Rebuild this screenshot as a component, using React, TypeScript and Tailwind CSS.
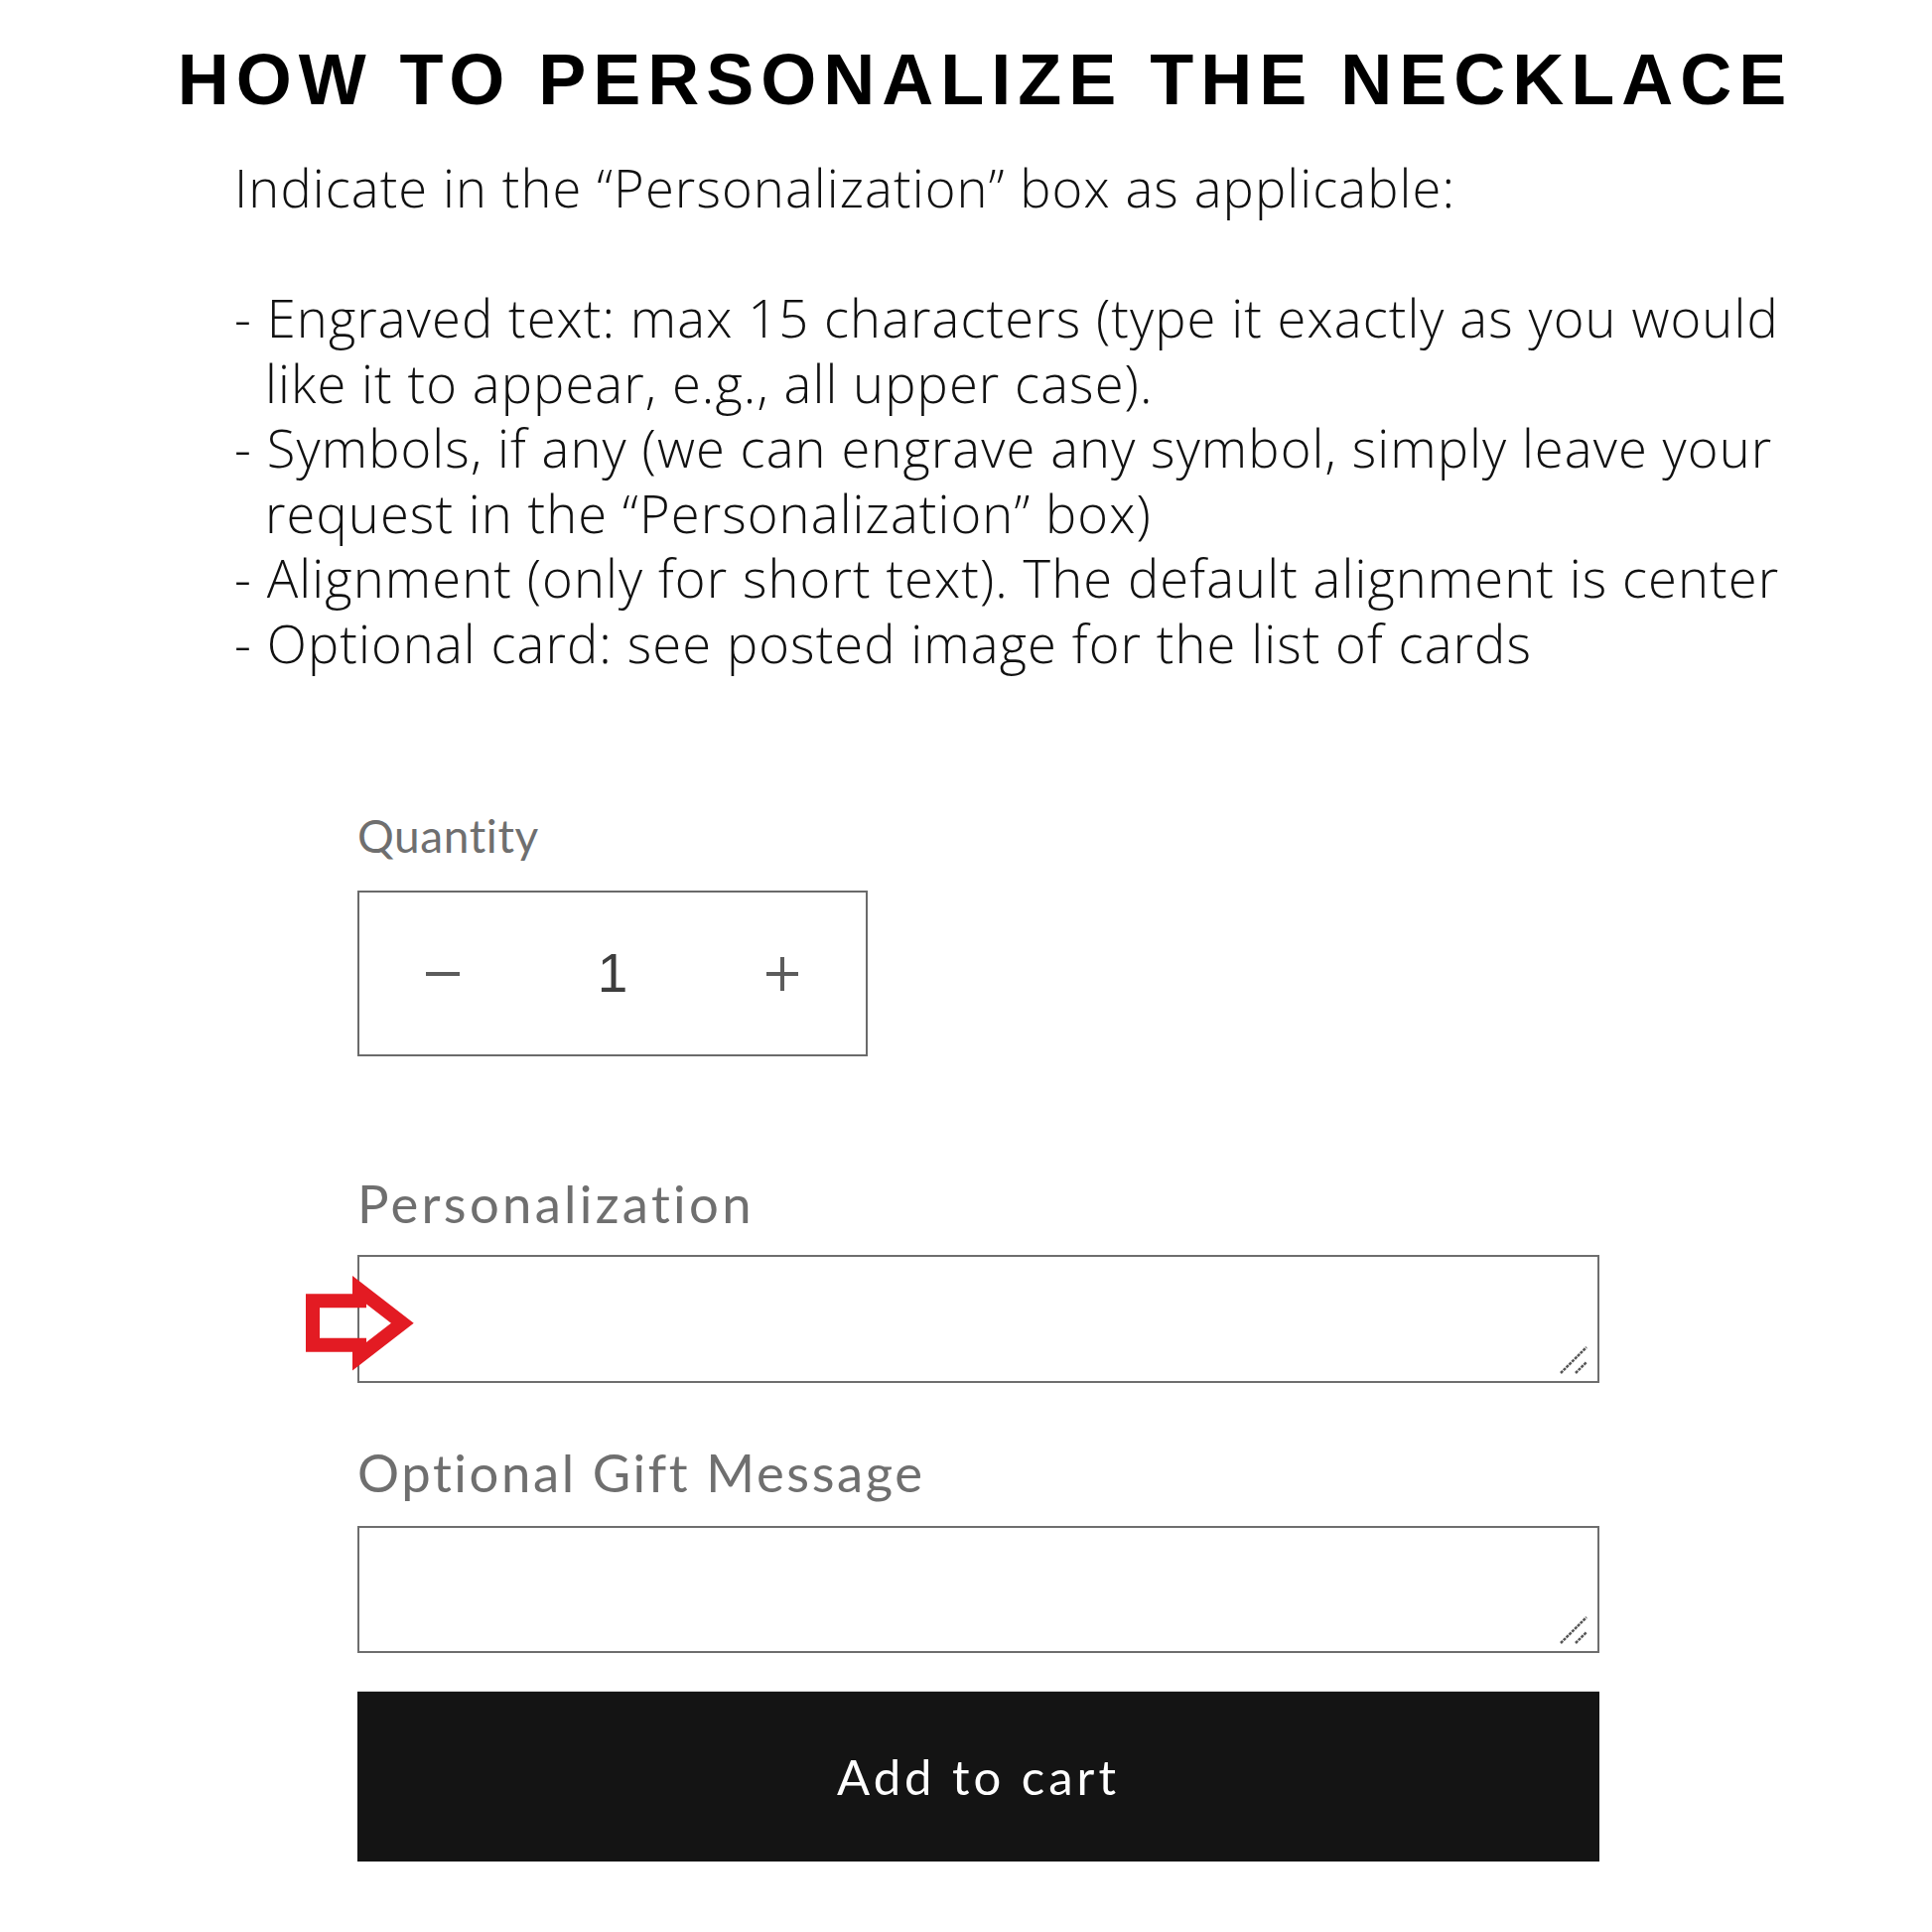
import { useState } from 'react';

const bodyLines: { text: string; indent?: boolean }[] = [
  { text: 'Indicate in the \u201cPersonalization\u201d box as applicable:' },
  { text: '\u00a0' },
  { text: '- Engraved text: max 15 characters (type it exactly as you would' },
  { text: 'like it to appear, e.g., all upper case).', indent: true },
  { text: '- Symbols, if any (we can engrave any symbol, simply leave your' },
  { text: 'request in the \u201cPersonalization\u201d box)', indent: true },
  { text: '- Alignment (only for short text). The default alignment is center' },
  { text: '- Optional card: see posted image for the list of cards' },
];

function ResizeGrip() {
  return (
    <svg
      className="absolute right-[10px] bottom-[8px] pointer-events-none"
      width="30"
      height="30"
      viewBox="0 0 30 30"
    >
      <line x1="1" y1="28" x2="27" y2="2" stroke="#555" strokeWidth="2.5" strokeDasharray="3 1" />
      <line x1="16" y1="28" x2="27" y2="17" stroke="#555" strokeWidth="2.5" strokeDasharray="3 1" />
    </svg>
  );
}

function RedArrow() {
  return (
    <svg
      className="absolute left-[-52px] top-[20px] pointer-events-none overflow-visible"
      width="110"
      height="97"
      viewBox="0 0 110 97"
    >
      <polygon
        points="7,26.3 54,26.3 54,15.2 97.3,48.7 54,82.2 54,70.7 7,70.7"
        fill="none"
        stroke="#e31b23"
        strokeWidth="14"
        strokeLinejoin="miter"
      />
    </svg>
  );
}

export default function App() {
  const [qty, setQty] = useState(1);
  const [personal, setPersonal] = useState('');
  const [gift, setGift] = useState('');

  const labelFont = { fontFamily: 'Lato, "Noto Sans", sans-serif' };

  return (
    <div className="w-[1946px] h-[1946px] bg-white overflow-hidden">
      <h1
        className="pt-[44px] pl-[39px] text-center whitespace-nowrap text-[72px] leading-[72px] font-bold tracking-[7px] text-black"
        style={{ fontFamily: '"Liberation Sans", Arial, sans-serif' }}
      >
        HOW TO PERSONALIZE THE NECKLACE
      </h1>

      <div
        className="mt-[40px] pl-[236px] text-[52.5px] leading-[65.5px] font-light tracking-[1.1px] text-[#111]"
        style={{ fontFamily: '"Open Sans", sans-serif' }}
      >
        {bodyLines.map((line, i) => (
          <div key={i} className={`whitespace-nowrap ${line.indent ? 'pl-[31px]' : ''}`}>
            {line.text}
          </div>
        ))}
      </div>

      <div className="ml-[360px] mt-[139px] w-[1251px] flex flex-col" style={labelFont}>
        <label className="text-[46px] leading-[46px] tracking-[0.6px] text-[#6f6f6f]">Quantity</label>
        <div className="mt-[32px] w-[514px] h-[167px] border-2 border-[#6a6a6a] grid grid-cols-[168px_1fr_168px] items-center">
          <button
            type="button"
            onClick={() => setQty((q) => Math.max(1, q - 1))}
            className="h-full flex items-center justify-center"
          >
            <svg width="34" height="34" viewBox="0 0 34 34">
              <line x1="0" y1="17" x2="34" y2="17" stroke="#5c5c5c" strokeWidth="4" />
            </svg>
          </button>
          <input
            value={qty}
            readOnly
            className="w-full text-center text-[55px] text-[#3d3d3d] outline-none bg-transparent"
            style={{ fontFamily: '"Liberation Sans", Arial, sans-serif' }}
          />
          <button
            type="button"
            onClick={() => setQty((q) => q + 1)}
            className="h-full flex items-center justify-center"
          >
            <svg width="34" height="34" viewBox="0 0 34 34">
              <line x1="1" y1="17" x2="33" y2="17" stroke="#5c5c5c" strokeWidth="4" />
              <line x1="17" y1="0" x2="17" y2="34" stroke="#5c5c5c" strokeWidth="4" />
            </svg>
          </button>
        </div>

        <label className="mt-[121px] text-[52.6px] leading-[53px] tracking-[3.3px] text-[#6f6f6f]">
          Personalization
        </label>
        <div className="relative mt-[26px] h-[129px]">
          <textarea
            value={personal}
            onChange={(e) => setPersonal(e.target.value)}
            className="block w-full h-full border-2 border-[#6e6e6e] bg-white resize-none outline-none"
          />
          <ResizeGrip />
          <RedArrow />
        </div>

        <label className="mt-[63px] text-[52.6px] leading-[53px] tracking-[2.6px] text-[#6f6f6f]">
          Optional Gift Message
        </label>
        <div className="relative mt-[28px] h-[128px]">
          <textarea
            value={gift}
            onChange={(e) => setGift(e.target.value)}
            className="block w-full h-full border-2 border-[#6e6e6e] bg-white resize-none outline-none"
          />
          <ResizeGrip />
        </div>

        <button
          type="button"
          className="mt-[38px] h-[172px] w-full bg-[#141414] text-white text-[49px] tracking-[4px] border-t border-[#cfcfcf]"
        >
          Add to cart
        </button>
      </div>
    </div>
  );
}
